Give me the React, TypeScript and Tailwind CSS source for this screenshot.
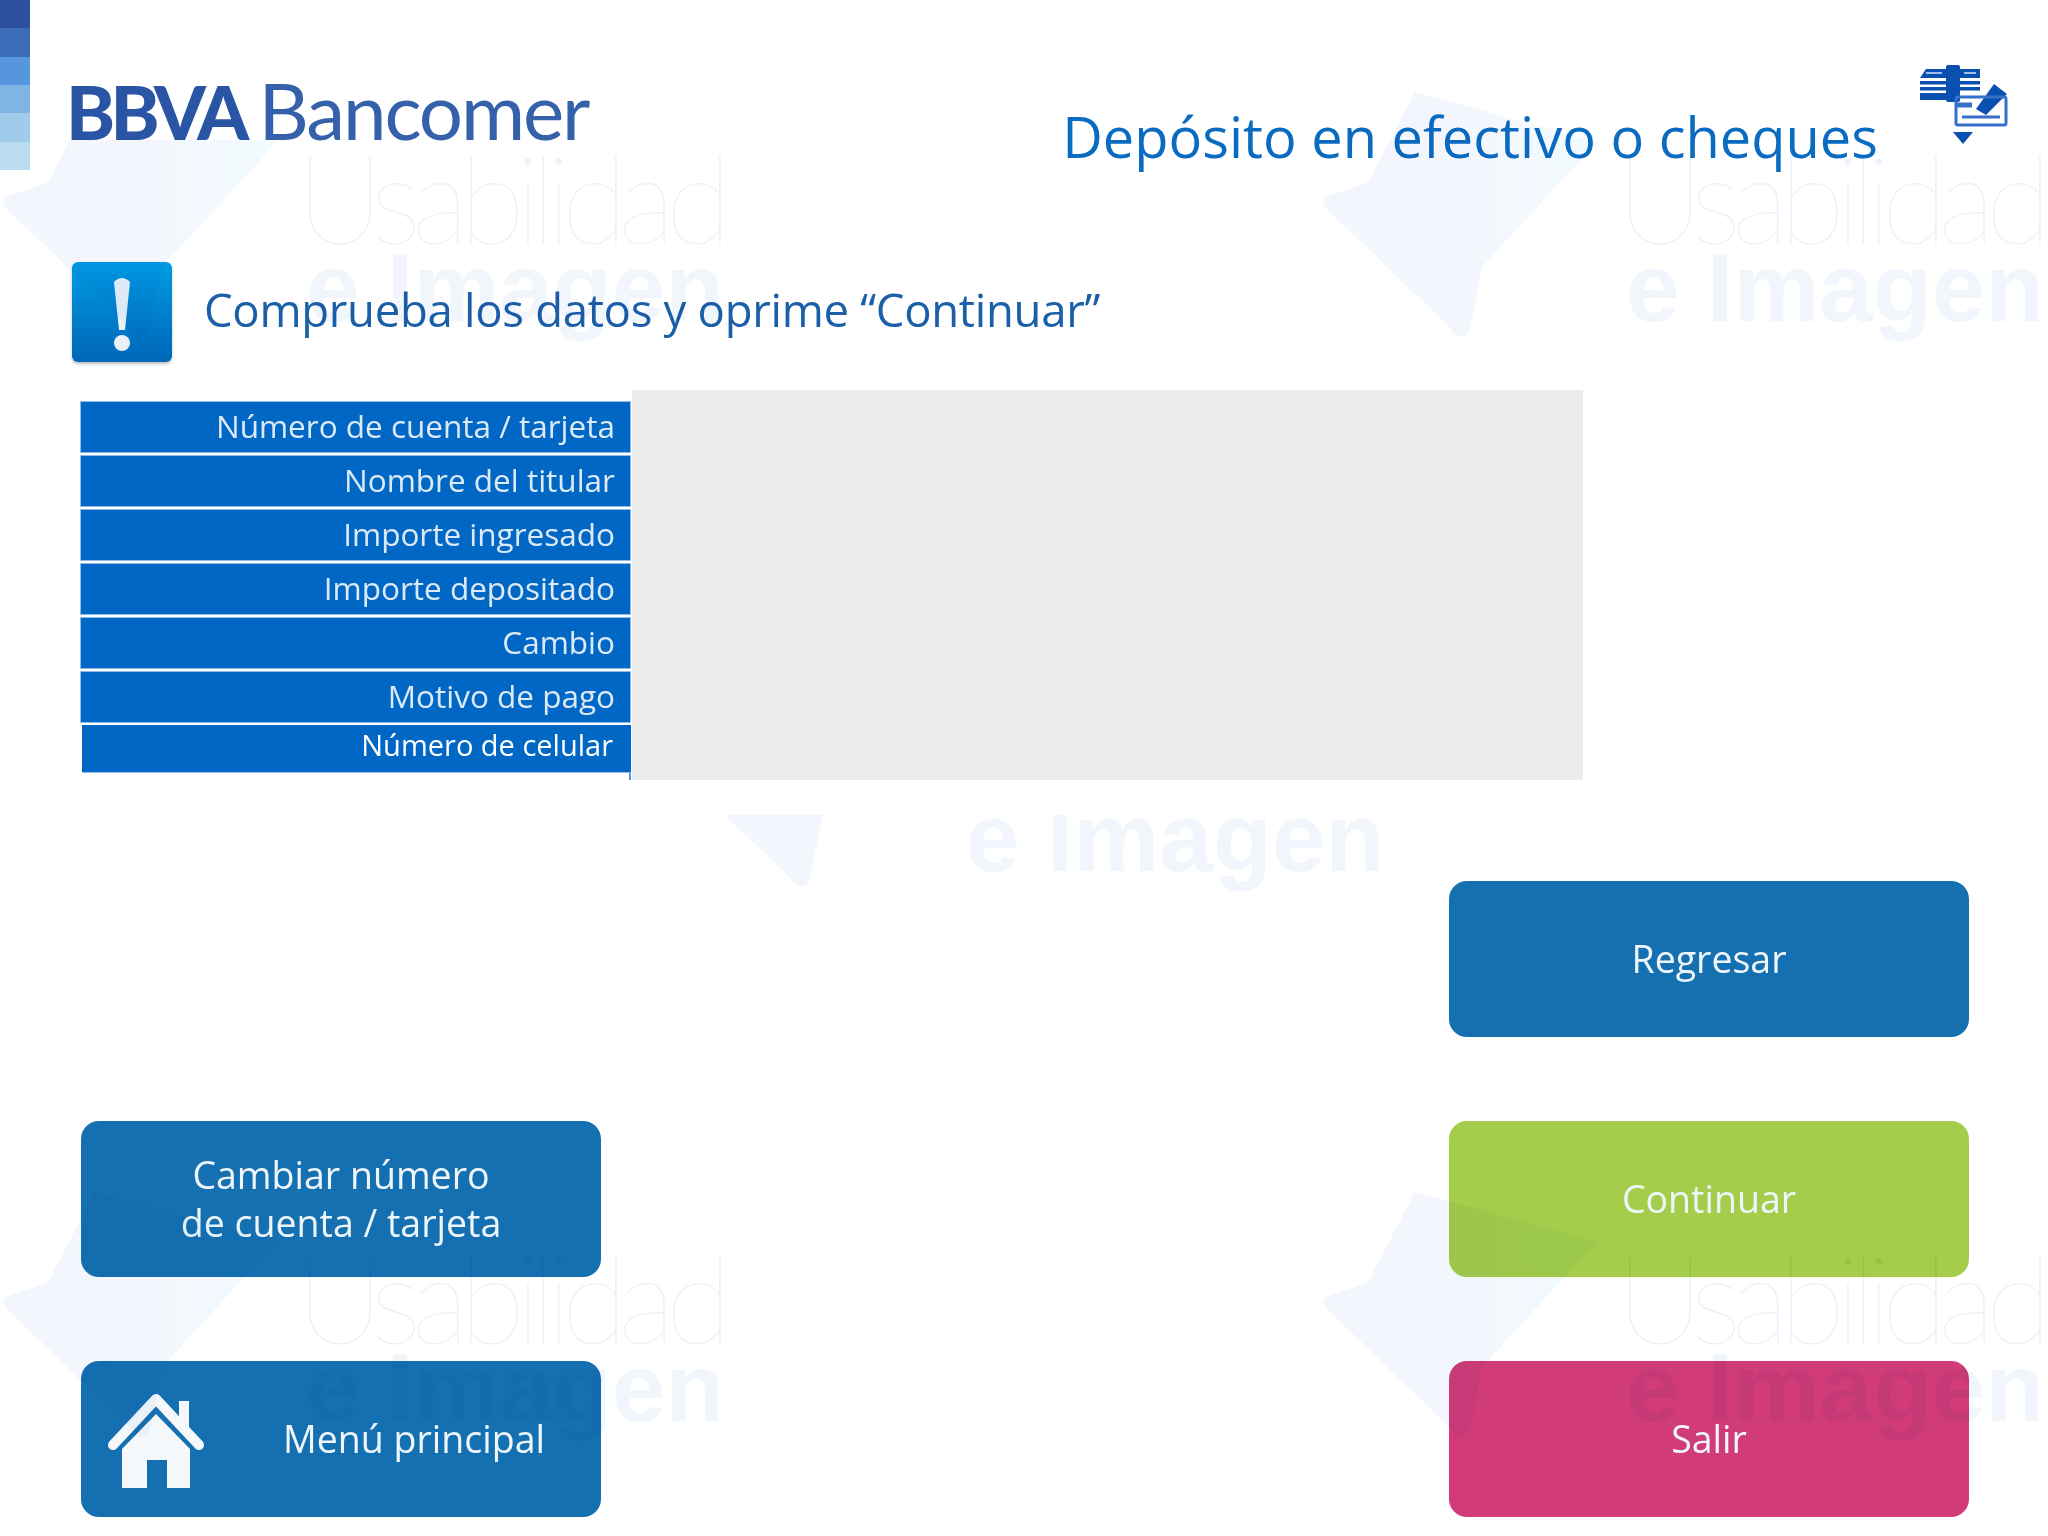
const rows = [
  "Número de cuenta / tarjeta",
  "Nombre del titular",
  "Importe ingresado",
  "Importe depositado",
  "Cambio",
  "Motivo de pago",
];

const strip = ["bg-[#2f4f9f]", "bg-[#3b6cb8]", "bg-[#5596dc]", "bg-[#7fb5e2]", "bg-[#a0cbea]", "bg-[#badcf0]"];

function WatermarkTile({ className }: { className: string }) {
  return (
    <div className={"absolute h-[345px] w-[730px] " + className}>
      <svg className="absolute left-0 top-0" width="285" height="345" viewBox="0 0 285 345">
        <defs>
          <linearGradient id="wm" x1="0" y1="0" x2="1" y2="0">
            <stop offset="0" stopColor="#f3f6fd" />
            <stop offset="0.55" stopColor="#f3f7fd" />
            <stop offset="1" stopColor="#f2fbff" />
          </linearGradient>
        </defs>
        <path
          d="M95 92 L277 142 L162 267 L150 330 Q140 345 130 328 L6 208 Q0 200 8 196 L48 182 Z"
          fill="url(#wm)"
        />
      </svg>
      <p className="absolute left-[296px] top-[132px] whitespace-nowrap font-['Lato',sans-serif] text-[122px] leading-[130px] font-thin tracking-[-10px] text-[#e9f1fa]">
        Usabilidad
      </p>
      <p className="absolute left-[306px] top-[233px] whitespace-nowrap font-['Liberation_Sans',sans-serif] text-[96px] leading-[110px] font-bold tracking-[0.3px] text-[#f1f5fc]">
        e Imagen
      </p>
    </div>
  );
}

function Btn({ children, color, className = "" }: { children: React.ReactNode; color: string; className?: string }) {
  return (
    <div
      className={
        "flex h-[156px] w-[520px] items-center justify-center rounded-[18px] pb-px text-center font-['Open_Sans',sans-serif] text-[37.5px] leading-[48px] text-[#eef6fb] " +
        color +
        " " +
        className
      }
    >
      {children}
    </div>
  );
}

export default function App() {
  return (
    <div className="relative h-[1536px] w-[2048px] overflow-hidden bg-white">
      <header className="flex h-[170px]">
        <div className="flex w-[30px] flex-col">
          {strip.map((c) => (
            <div key={c} className={"h-[28.4px] " + c} />
          ))}
        </div>
        <div className="ml-[36px] mt-[65px] flex items-baseline whitespace-nowrap font-['Lato',sans-serif] text-[78px] leading-[90px]">
          <span className="text-[74px] font-black tracking-[-4.5px] text-[#2a55a5]">BBVA</span>
          <span className="ml-[14px] font-normal tracking-[-2.1px] text-[#3560aa]">Bancomer</span>
        </div>
        <h1 className="ml-auto mt-[100px] h-[70px] whitespace-nowrap font-['Open_Sans',sans-serif] text-[56px] leading-[72px] text-[#0a6cc0]">
          Depósito en efectivo o cheques
        </h1>
        <svg className="ml-[42px] mr-[40px] mt-[65px] shrink-0" width="88" height="80" viewBox="0 0 88 80">
          <g fill="#0a50b0">
            <path d="M6 4 H60 V13 H0 Z" />
            <rect x="0" y="16" width="60" height="3.5" />
            <rect x="0" y="22" width="60" height="3.5" />
            <rect x="0" y="28" width="36" height="7" />
            <rect x="26" y="0" width="14" height="37" rx="2" />
            <path d="M33 67 H53 L43 79 Z" />
            <path d="M74 19 L87 29 L66 50 L56 44 Z" />
          </g>
          <path d="M6 8 H22" stroke="#9fc0ea" strokeWidth="2" />
          <path d="M44 8 H56" stroke="#9fc0ea" strokeWidth="2" />
          <g fill="none" stroke="#3770c8" strokeWidth="3">
            <rect x="36" y="32" width="50" height="28" rx="2" />
            <path d="M36 40 H52" strokeWidth="5" />
            <path d="M42 52 H80" />
          </g>
        </svg>
      </header>

      <div className="ml-[72px] mt-[92px] flex h-[100px] items-center gap-[32px]">
        <div className="flex h-[100px] w-[100px] flex-col items-center rounded-[6px] bg-linear-to-b from-[#009ce3] to-[#0066b8] shadow-[0_2px_3px_rgba(0,0,0,0.25)]">
          <svg className="mt-[16px]" width="20" height="74" viewBox="0 0 20 74">
            <path d="M2 4 Q10 -4 18 4 L13 52 H7 Z" fill="#e8f1f8" />
            <circle cx="10" cy="65" r="8" fill="#e8f1f8" />
          </svg>
        </div>
        <p className="-mt-[5px] whitespace-nowrap font-['Open_Sans',sans-serif] text-[45.5px] font-medium tracking-[-0.3px] text-[#1a5fa8]">
          Comprueba los datos y oprime “Continuar”
        </p>
      </div>

      <div className="ml-[80px] mt-[28px] flex h-[390px]">
        <div className="flex w-[551px] flex-col pt-[11px]">
          {rows.map((r) => (
            <div
              key={r}
              className="mb-[2px] flex h-[52px] items-center justify-end border border-[#8fbde8] bg-[#0068c4] pb-[2px] pr-[15px] font-['Open_Sans',sans-serif] text-[31.5px] font-medium text-[#dce9f6]"
            >
              {r}
            </div>
          ))}
          <div className="ml-[2px] flex h-[48px] items-center justify-end border-b border-[#8fbde8] bg-[#0068c4] pb-[8px] pr-[18px] font-['Open_Sans',sans-serif] text-[29px] text-white">
            Número de celular
          </div>
          <div className="h-[7px] w-[2px] self-end bg-[#5b9ad8]" />
        </div>
        <div className="ml-px h-[390px] w-[951px] bg-[#ececec]" />
      </div>

      <div className="ml-[81px] mt-[101px] grid w-[1888px] grid-cols-[520px_520px] justify-between gap-y-[84px]">
        <div />
        <Btn color="bg-[#1470b0]">Regresar</Btn>
        <Btn color="bg-[#1470b0]">
          Cambiar número
          <br />
          de cuenta / tarjeta
        </Btn>
        <Btn color="bg-[#a4cd4b]">Continuar</Btn>
        <Btn color="bg-[#1470b0]" className="relative">
          <svg className="absolute left-[26px] top-[32px]" width="98" height="95" viewBox="0 0 98 95">
            <path d="M72 8 H82 V36 H72 Z" fill="#f4f8fb" />
            <path d="M6 52 L49 6 L92 52" fill="none" stroke="#f4f8fb" strokeWidth="10" strokeLinecap="round" strokeLinejoin="round" />
            <path d="M15 56 L49 21 L83 56 V95 H60 V67 H40 V95 H15 Z" fill="#f4f8fb" />
          </svg>
          <span className="ml-[146px]">Menú principal</span>
        </Btn>
        <Btn color="bg-[#d13b78]">Salir</Btn>
      </div>

      {/* watermark sits over everything, panel and header strips stay clean */}
      <div className="pointer-events-none absolute inset-0 mix-blend-multiply">
        <div className="absolute left-0 top-[140px] h-[240px] w-[730px] overflow-hidden">
          <WatermarkTile className="left-0 top-[-140px]" />
        </div>
        <WatermarkTile className="left-[1320px] top-0" />
        <div className="absolute left-[660px] top-[815px] h-[90px] w-[730px] overflow-hidden">
          <WatermarkTile className="left-0 top-[-265px]" />
        </div>
        <WatermarkTile className="left-0 top-[1100px]" />
        <WatermarkTile className="left-[1320px] top-[1100px]" />
      </div>
    </div>
  );
}
